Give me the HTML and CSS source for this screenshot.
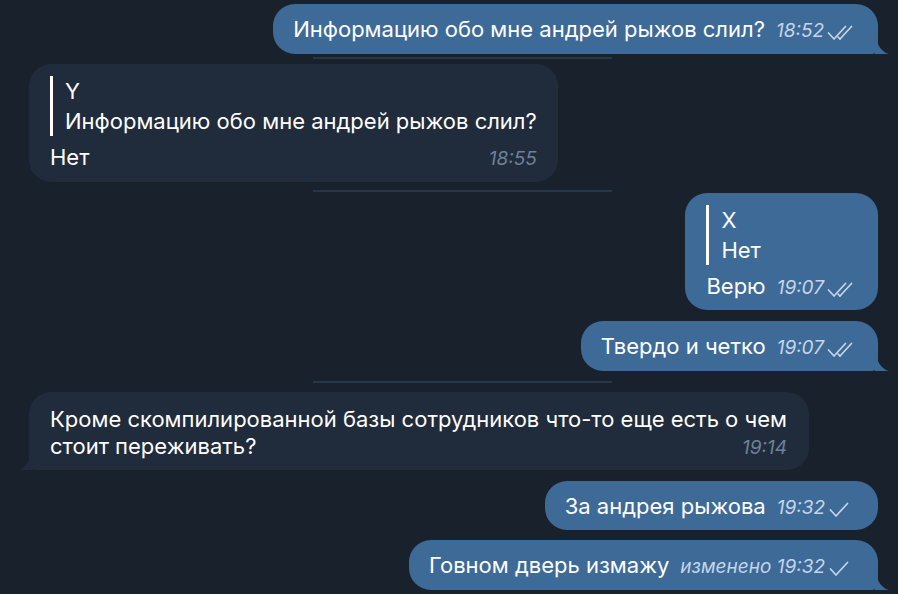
FILE: index.html
```html
<!DOCTYPE html>
<html lang="ru">
<head>
<meta charset="utf-8">
<title>Chat</title>
<link rel="stylesheet" href="styles.css">
</head>
<body>
<div class="chat">
  <div class="bubble out tailed m1">
    <span class="text">Информацию обо мне андрей рыжов слил?</span>
    <span class="meta"><span class="time">18:52</span><svg class="chk2" viewBox="0 0 26 16"><path d="M1.5 8 L7 14 L18.5 1.5" /><path d="M13 14 L24.5 1.5" /><path d="M11 12 L13 14" /></svg></span>
    <svg class="tail-r" viewBox="0 0 14 22"><path d="M0 0 L0 22 L14 22 Q6 20 2 10 Q1 6 0 0 Z"/></svg>
  </div>
  <div class="sep s1"></div>
  <div class="bubble in m2">
    <div class="quote">
      <div class="qname">Y</div>
      <div class="qtext">Информацию обо мне андрей рыжов слил?</div>
    </div>
    <div class="foot">
      <span class="text">Нет</span>
      <span class="meta"><span class="time">18:55</span></span>
    </div>
  </div>
  <div class="sep s2"></div>
  <div class="bubble out m3">
    <div class="quote">
      <div class="qname">X</div>
      <div class="qtext">Нет</div>
    </div>
    <div class="foot">
      <span class="text">Верю</span>
      <span class="meta"><span class="time">19:07</span><svg class="chk2" viewBox="0 0 26 16"><path d="M1.5 8 L7 14 L18.5 1.5" /><path d="M13 14 L24.5 1.5" /><path d="M11 12 L13 14" /></svg></span>
    </div>
  </div>
  <div class="bubble out tailed m4">
    <span class="text">Твердо и четко</span>
    <span class="meta"><span class="time">19:07</span><svg class="chk2" viewBox="0 0 26 16"><path d="M1.5 8 L7 14 L18.5 1.5" /><path d="M13 14 L24.5 1.5" /><path d="M11 12 L13 14" /></svg></span>
    <svg class="tail-r" viewBox="0 0 14 22"><path d="M0 0 L0 22 L14 22 Q6 20 2 10 Q1 6 0 0 Z"/></svg>
  </div>
  <div class="sep s3"></div>
  <div class="bubble in tailed-l m5">
    <div class="line">Кроме скомпилированной базы сотрудников что-то еще есть о чем</div>
    <div class="foot">
      <span class="text">стоит переживать?</span>
      <span class="meta"><span class="time">19:14</span></span>
    </div>
    <svg class="tail-l" viewBox="0 0 14 22"><path d="M14 0 L14 22 L0 22 Q8 20 12 10 Q13 6 14 0 Z"/></svg>
  </div>
  <div class="bubble out m6">
    <span class="text">За андрея рыжова</span>
    <span class="meta"><span class="time">19:32</span><svg class="chk1" viewBox="0 0 20 16"><path d="M1.5 8 L7 14 L18.5 1.5" /></svg></span>
  </div>
  <div class="bubble out tailed m7">
    <span class="text">Говном дверь измажу</span>
    <span class="meta"><span class="time">изменено 19:32</span><svg class="chk1" viewBox="0 0 20 16"><path d="M1.5 8 L7 14 L18.5 1.5" /></svg></span>
    <svg class="tail-r" viewBox="0 0 14 22"><path d="M0 0 L0 22 L14 22 Q6 20 2 10 Q1 6 0 0 Z"/></svg>
  </div>
</div>
</body>
</html>
```

FILE: styles.css
```css
html, body {
  margin: 0;
  padding: 0;
  background: #18212c;
}
body {
  width: 898px;
  height: 594px;
  overflow: hidden;
  font-family: "Inter", "Roboto", sans-serif;
  color: #ffffff;
}
.chat {
  display: flex;
  flex-direction: column;
  padding: 4px 20px 0 29px;
}
.bubble {
  position: relative;
  border-radius: 22px;
  font-size: 22px;
  line-height: 26px;
  box-sizing: border-box;
}
.out {
  align-self: flex-end;
  background: #3e6a98;
}
.in {
  align-self: flex-start;
  background: #202c3b;
}
.m1, .m4, .m6, .m7 {
  display: flex;
  align-items: baseline;
  height: 50px;
  padding: 12px 25px 12px 20px;
}
.m1 { margin-top: 0; }
.m4 { margin-top: 11px; }
.m6 { margin-top: 11px; height: 49px; padding-right: 29px; }
.m7 { margin-top: 10px; padding-right: 29px; }
.tailed { border-bottom-right-radius: 6px; }
.tailed-l { border-bottom-left-radius: 6px; }
.meta {
  display: inline-flex;
  align-items: baseline;
  margin-left: 11px;
  white-space: nowrap;
}
.time {
  font-style: italic;
  font-size: 19px;
  color: #c4d5e8;
}
.in .time { color: #6f8196; }
.chk2 {
  width: 26px;
  height: 16px;
  margin-left: 3px;
  fill: none;
  stroke: #c4d5e8;
  stroke-width: 1.7;
  stroke-linecap: round;
  stroke-linejoin: round;
  align-self: center;
  position: relative;
  top: 2px;
}
.chk1 {
  width: 20px;
  height: 16px;
  margin-left: 4px;
  fill: none;
  stroke: #c4d5e8;
  stroke-width: 1.7;
  stroke-linecap: round;
  stroke-linejoin: round;
  align-self: center;
  position: relative;
  top: 2px;
}
.tail-r {
  position: absolute;
  right: -11px;
  bottom: 0;
  width: 14px;
  height: 22px;
  fill: #3e6a98;
}
.tail-l {
  position: absolute;
  left: -11px;
  bottom: 0;
  width: 14px;
  height: 22px;
  fill: #202c3b;
}
.sep {
  align-self: flex-start;
  margin-left: 284px;
  width: 299px;
  height: 2px;
  background: #27374a;
}
.s1 { margin-top: 3px; }
.s2 { margin-top: 8px; }
.s3 { margin-top: 10px; }
.m2 {
  margin-top: 5px;
  padding: 12px 21px 11px 21px;
  height: 118px;
}
.m3 {
  margin-top: 1px;
  padding: 12px 25px 9px 21px;
  height: 117px;
}
.quote {
  border-left: 3px solid #ffffff;
  padding-left: 12px;
  line-height: 30px;
}
.foot {
  display: flex;
  align-items: baseline;
  justify-content: space-between;
  margin-top: 7px;
  line-height: 28px;
}
.m5 {
  margin-top: 9px;
  padding: 14px 22px 10px 21px;
  height: 78px;
  line-height: 27px;
}
.m5 .foot {
  margin-top: 0;
  line-height: 27px;
}
```
